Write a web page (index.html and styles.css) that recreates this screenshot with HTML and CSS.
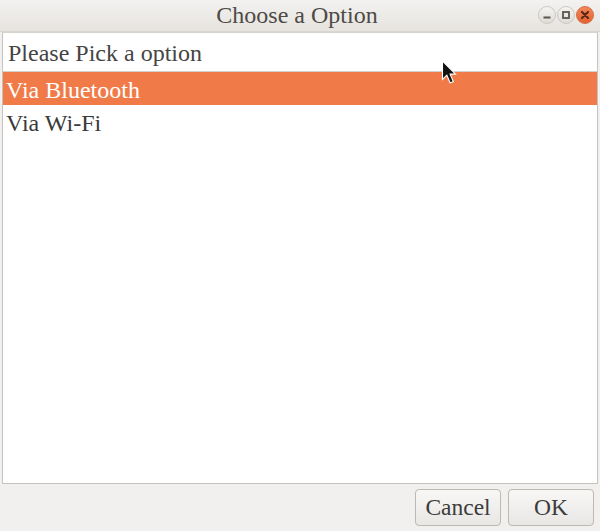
FILE: index.html
```html
<!DOCTYPE html>
<html>
<head>
<meta charset="utf-8">
<link rel="stylesheet" href="styles.css">
</head>
<body>
<div class="window">
  <div class="titlebar">
    <div class="title">Choose a Option</div>
    <div class="controls">
      <span class="wbtn"><svg width="18" height="18" viewBox="0 0 18 18"><defs><linearGradient id="g1" x1="0" y1="0" x2="0" y2="1"><stop offset="0" stop-color="#f6f5f3"/><stop offset="1" stop-color="#dedad5"/></linearGradient></defs><circle cx="9" cy="9" r="8.5" fill="url(#g1)" stroke="#cbc7c1"/><rect x="5.5" y="10.5" width="7" height="2" fill="#5a554f"/></svg></span>
      <span class="wbtn"><svg width="18" height="18" viewBox="0 0 18 18"><circle cx="9" cy="9" r="8.5" fill="url(#g1)" stroke="#cbc7c1"/><rect x="6" y="6" width="6" height="6" fill="none" stroke="#5a554f" stroke-width="1.8"/></svg></span>
      <span class="wbtn"><svg width="18" height="18" viewBox="0 0 18 18"><defs><linearGradient id="g2" x1="0" y1="0" x2="0" y2="1"><stop offset="0" stop-color="#f5875b"/><stop offset="1" stop-color="#e45f2e"/></linearGradient></defs><circle cx="9" cy="9" r="8.5" fill="url(#g2)" stroke="#d27149"/><path d="M6 6 L12 12 M12 6 L6 12" stroke="#5a2a18" stroke-width="2.2" stroke-linecap="round"/></svg></span>
    </div>
  </div>
  <div class="body">
    <div class="list">
      <div class="row header">Please Pick a option</div>
      <div class="row selected">Via Bluetooth</div>
      <div class="row">Via Wi-Fi</div>
    </div>
    <div class="buttons">
      <button class="btn">Cancel</button>
      <button class="btn">OK</button>
    </div>
  </div>
  <svg class="cursor" width="16" height="26" viewBox="0 0 14 24"><path d="M1 1 L1 18 L5 14 L8 21 L11 20 L8 13 L13 13 Z" fill="#111" stroke="#fff" stroke-width="1"/></svg>
</div>
</body>
</html>
```
FILE: styles.css
```css
html, body {
  margin: 0;
  padding: 0;
  background: #f0efed;
}
.window {
  position: relative;
  width: 600px;
  height: 531px;
  display: flex;
  flex-direction: column;
  font-family: "Liberation Serif", serif;
  background: #f1f0ee;
}
.titlebar {
  height: 31px;
  flex: none;
  position: relative;
  display: flex;
  align-items: center;
  justify-content: center;
  background: linear-gradient(#f3f2f0, #e6e3df);
  border-bottom: 1px solid #dad6d1;
  border-radius: 4px 4px 0 0;
}
.title {
  font-size: 24px;
  color: #4e4a46;
  margin-left: -6px;
}
.controls {
  position: absolute;
  right: 6px;
  top: 6px;
  display: flex;
  gap: 1px;
}
.wbtn {
  width: 18px;
  height: 18px;
  display: block;
}
.wbtn svg { display: block; }
.body {
  flex: 1;
  display: flex;
  flex-direction: column;
  padding: 0 2px 0 2px;
}
.list {
  flex: none;
  height: 450px;
  background: #fff;
  border: 1px solid #c6c2bd;
  border-top-color: #d6d3ce;
}
.row {
  font-size: 24px;
  color: #3a3a3a;
  padding-left: 3px;
  height: 33px;
  line-height: 37px;
  overflow: hidden;
}
.row.header {
  height: 38px;
  line-height: 41px;
  padding-left: 5px;
  color: #454545;
  border-bottom: 1px solid #d3d0cc;
}
.row.selected {
  background: #f07b48;
  color: #fff;
}
.buttons {
  display: flex;
  justify-content: flex-end;
  gap: 7px;
  padding: 5px 4px 0 0;
}
.btn {
  width: 86px;
  height: 37px;
  font-family: "Liberation Serif", serif;
  font-size: 23.5px;
  color: #3c3c3c;
  border: 1px solid #bdb9b3;
  border-radius: 4px;
  background: linear-gradient(#f8f7f6, #e9e7e4);
  padding: 0;
}
.cursor {
  position: absolute;
  left: 441px;
  top: 60px;
}
```
